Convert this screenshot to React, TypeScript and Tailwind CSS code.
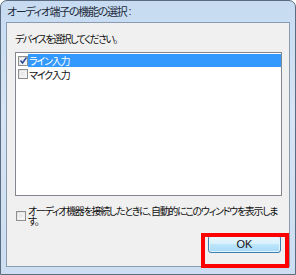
import React from "react";

const font = "font-['Noto_Sans_CJK_JP','Noto_Sans',sans-serif] [font-feature-settings:'palt']";

function Box({ checked }: { checked?: boolean }) {
  return (
    <div className="relative w-[10px] h-[10px] shrink-0 border border-[#8f8f8f] bg-[linear-gradient(135deg,#dcdcdc,#f8f8f8)]">
      <div className="absolute inset-[1px] border border-[#f4f4f4]" />
      {checked && (
        <svg className="absolute left-[0px] top-[-1px]" width="9" height="9" viewBox="0 0 9 9">
          <path d="M1.5 4.5 L3.5 7 L7.5 1.5" fill="none" stroke="#2a4a9a" strokeWidth="1.5" />
        </svg>
      )}
    </div>
  );
}

export default function App() {
  return (
    <div className={`relative w-[296px] h-[275px] overflow-hidden bg-white ${font}`}>
      <div className="flex flex-col w-[296px] h-[275px] rounded-t-[7px] border border-[#5b6b80] bg-[linear-gradient(180deg,#c6dbf1,#d6e4f5_40%,#cddef2)]">
        <div className="h-[21px] pl-[6px] flex items-center text-[11px] leading-none text-[#1e2b3a]">
          <span className="tracking-[-1.3px]">オーディオ端子の機能の選択</span>
          <span className="ml-[2px] font-['Liberation_Sans',sans-serif]">:</span>
        </div>
        <div className="mx-[5px] h-[245px] border border-[#8a9cb2] bg-[#f0f0f0] flex flex-col text-[10px] tracking-[-1.2px] text-[#111]">
          <div className="ml-[8px] mt-[10px] leading-[12px] tracking-[-1.5px]">デバイスを選択してください。</div>
          <div className="ml-[8px] mt-[7px] w-[267px] h-[144px] border border-[#828790] bg-white pt-[1px] flex flex-col">
            <div className="flex items-center h-[13px]">
              <div className="ml-[1px] w-[11px] flex justify-center"><Box checked /></div>
              <div className="flex-1 h-[13px] bg-[#3399ff] text-white leading-[13px] pl-[1px]">ライン入力</div>
            </div>
            <div className="flex h-[14px]">
              <div className="ml-[1px] w-[11px] pt-[2px] flex justify-center"><Box /></div>
              <div className="flex-1 pt-[2px] leading-[12px] pl-[1px]">マイク入力</div>
            </div>
          </div>
          <div className="ml-[9px] mt-[10px] flex items-center">
            <Box />
            <div className="ml-[2px] w-[256px] leading-[10px] tracking-[-1.3px]">
              オーディオ機器を接続したときに、自動的にこのウィンドウを表示します。
            </div>
          </div>
          <div className="flex justify-end mr-[8px] mt-[9px]">
            <button className="w-[73px] h-[18px] rounded-[3px] border border-[#3c7fb1] bg-[linear-gradient(180deg,#eaf6fd_0%,#d9f0fc_50%,#bee6fd_51%,#a7d9f5_100%)] shadow-[inset_0_0_0_1px_#e0f4ff] text-[11px] leading-none tracking-normal text-[#111] font-['Liberation_Sans',sans-serif]">
              OK
            </button>
          </div>
        </div>
      </div>
      <div className="absolute left-[201px] top-[233px] w-[88px] h-[35px] border-[4px] border-[#ff0000]" />
    </div>
  );
}
